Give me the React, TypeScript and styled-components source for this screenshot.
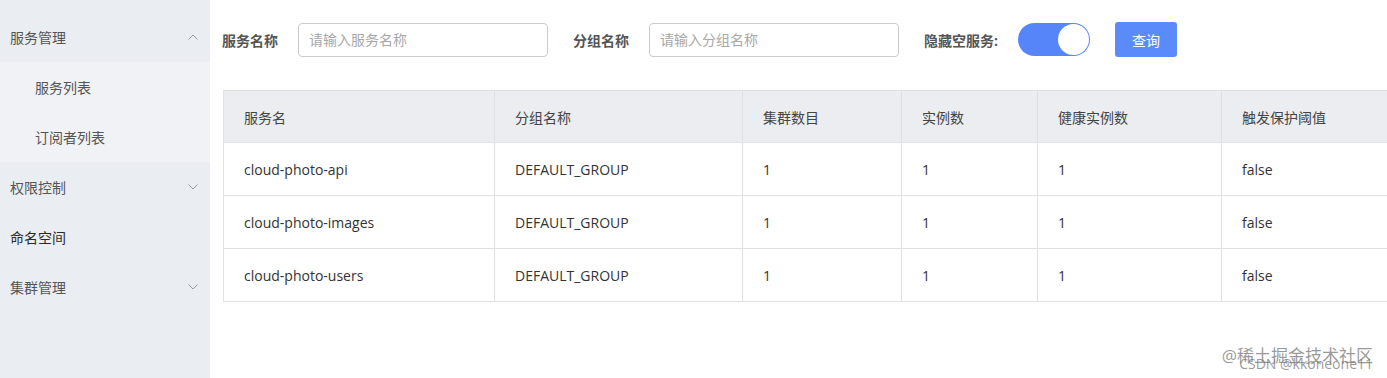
import { createGlobalStyle } from "styled-components";
import styled from "styled-components";

const GlobalStyle = createGlobalStyle`
    html, body {
        margin: 0;
        padding: 0;
        background: #fff;
    }
    body {
        font-family: "Open Sans", "Noto Sans CJK SC", sans-serif;
        font-size: 14px;
        color: #333;
    }
    * {
        box-sizing: border-box;
    }
`;

const Layout = styled.div`
    display: flex;
    height: 100vh;
    position: relative;
    overflow: hidden;
`;

const Sidebar = styled.nav`
    width: 210px;
    flex-shrink: 0;
    background: #eaedf1;
    padding-top: 12px;
`;

const MenuItem = styled.div<{ $dark?: boolean }>`
    height: 50px;
    display: flex;
    align-items: center;
    justify-content: space-between;
    padding: 0 12px 0 10px;
    color: ${p => (p.$dark ? "#2b2b2b" : "#555")};
    font-size: 14px;
`;

const SubMenu = styled.div`
    background: #f0f2f5;
`;

const SubItem = styled.div`
    height: 50px;
    display: flex;
    align-items: center;
    padding-left: 35px;
    color: #555;
    font-size: 14px;
`;

const Main = styled.main`
    flex: 1;
    min-width: 0;
    padding: 22px 0 0 12px;
`;

const Toolbar = styled.div`
    display: flex;
    align-items: center;
    height: 35px;
`;

const Label = styled.label`
    font-weight: bold;
    color: #555;
    font-size: 14px;
    margin-right: 20px;
    white-space: nowrap;
`;

const SearchInput = styled.input`
    width: 250px;
    height: 34px;
    border: 1px solid #c9cbd0;
    border-radius: 4px;
    padding: 0 10px;
    font-family: inherit;
    font-size: 14px;
    color: #333;
    margin-right: 25px;
    outline: none;
    &::placeholder {
        color: #a8a8a8;
    }
`;

const Switch = styled.div<{ $on: boolean }>`
    width: 72px;
    height: 33px;
    border-radius: 17px;
    background: ${p => (p.$on ? "#5585f8" : "#dcdfe6")};
    display: flex;
    align-items: center;
    justify-content: ${p => (p.$on ? "flex-end" : "flex-start")};
    padding: 1px;
    margin-right: 25px;
`;

const Knob = styled.span`
    width: 31px;
    height: 31px;
    border-radius: 50%;
    background: #fff;
`;

const QueryButton = styled.button`
    width: 62px;
    height: 35px;
    border: none;
    border-radius: 3px;
    background: #5b8bfb;
    color: #fff;
    font-family: inherit;
    font-size: 14px;
`;

const Table = styled.table`
    margin: 33px 0 0 1px;
    border-collapse: collapse;
    width: 1180px;
    table-layout: fixed;
`;

const HeadCell = styled.th`
    height: 52px;
    background: #ebedf0;
    border: 1px solid #dfe1e5;
    text-align: left;
    font-weight: normal;
    color: #444;
    padding: 0 20px;
    font-size: 14px;
`;

const Cell = styled.td`
    height: 53px;
    border: 1px solid #dfe1e5;
    padding: 0 20px;
    color: #333;
    font-size: 14px;
`;

const Watermark = styled.div`
    position: absolute;
    right: 14px;
    bottom: 7px;
    color: rgba(120, 120, 120, 0.75);
    font-size: 14px;
    line-height: 1;
    text-align: right;
`;

const WatermarkTop = styled.div`
    font-size: 17px;
    margin-bottom: -7px;
`;

const Chevron = ({ up }: { up?: boolean }) => (
    <svg width="10" height="6" viewBox="0 0 10 6">
        <polyline
            points={up ? "0.5,5.5 5,1 9.5,5.5" : "0.5,0.5 5,5 9.5,0.5"}
            fill="none"
            stroke="#999"
            strokeWidth="1"
        />
    </svg>
);

const columns = [
    { title: "服务名", width: 271 },
    { title: "分组名称", width: 248 },
    { title: "集群数目", width: 159 },
    { title: "实例数", width: 136 },
    { title: "健康实例数", width: 184 },
    { title: "触发保护阈值", width: 182 },
];

const services = ["cloud-photo-api", "cloud-photo-images", "cloud-photo-users"];

const App = () => {
    return (
        <Layout>
            <GlobalStyle />
            <Sidebar>
                <MenuItem>
                    服务管理 <Chevron up />
                </MenuItem>
                <SubMenu>
                    <SubItem>服务列表</SubItem>
                    <SubItem>订阅者列表</SubItem>
                </SubMenu>
                <MenuItem>
                    权限控制 <Chevron />
                </MenuItem>
                <MenuItem $dark>命名空间</MenuItem>
                <MenuItem>
                    集群管理 <Chevron />
                </MenuItem>
            </Sidebar>
            <Main>
                <Toolbar>
                    <Label>服务名称</Label>
                    <SearchInput placeholder="请输入服务名称" />
                    <Label>分组名称</Label>
                    <SearchInput placeholder="请输入分组名称" />
                    <Label>隐藏空服务:</Label>
                    <Switch $on>
                        <Knob />
                    </Switch>
                    <QueryButton>查询</QueryButton>
                </Toolbar>
                <Table>
                    <colgroup>
                        {columns.map(c => (
                            <col key={c.title} style={{ width: c.width }} />
                        ))}
                    </colgroup>
                    <thead>
                        <tr>
                            {columns.map(c => (
                                <HeadCell key={c.title}>{c.title}</HeadCell>
                            ))}
                        </tr>
                    </thead>
                    <tbody>
                        {services.map(name => (
                            <tr key={name}>
                                <Cell>{name}</Cell>
                                <Cell>DEFAULT_GROUP</Cell>
                                <Cell>1</Cell>
                                <Cell>1</Cell>
                                <Cell>1</Cell>
                                <Cell>false</Cell>
                            </tr>
                        ))}
                    </tbody>
                </Table>
            </Main>
            <Watermark>
                <WatermarkTop>@稀土掘金技术社区</WatermarkTop>
                CSDN @kkoneone11
            </Watermark>
        </Layout>
    );
};

export default App;
